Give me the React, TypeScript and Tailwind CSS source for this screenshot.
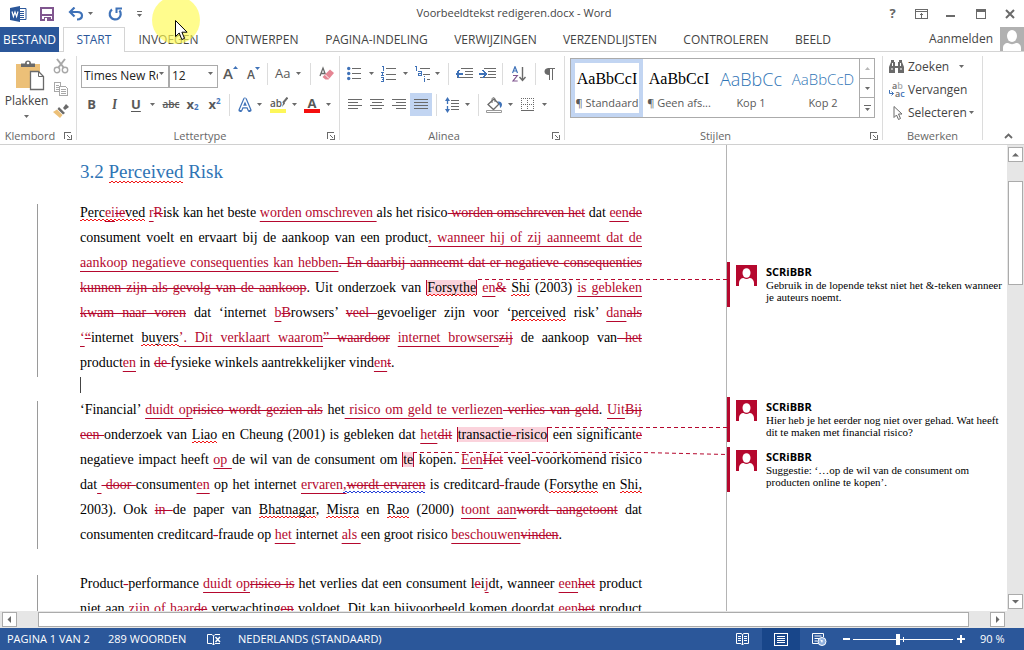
import React from "react";

type Kids = { children?: React.ReactNode };

const G = "#6a6a6a";
const B = "#3f72b8";

/* ---------- small building blocks ---------- */

function Svg({ w, h, crisp, children }: Kids & { w: number; h: number; crisp?: boolean }) {
  return (
    <svg width={w} height={h} viewBox={`0 0 ${w} ${h}`} fill="none" aria-hidden="true" className="shrink-0" shapeRendering={crisp ? "crispEdges" : "auto"}>
      {children}
    </svg>
  );
}

function Caret() {
  return (
    <Svg w={5} h={3}>
      <path d="M0 0h5L2.5 3z" fill={G} />
    </Svg>
  );
}

function Tool({ label, className, children }: Kids & { label: string; className: string }) {
  return (
    <button type="button" aria-label={label} className={`flex h-[23px] shrink-0 items-center justify-center ${className}`}>
      {children}
    </button>
  );
}

function Drop({ label, className, children }: Kids & { label: string; className: string }) {
  return (
    <button type="button" aria-label={label} className={`flex h-[23px] shrink-0 items-center justify-between ${className}`}>
      {children}
      <Caret />
    </button>
  );
}

function Sep({ className }: { className: string }) {
  return <span className={`h-[22px] w-px shrink-0 bg-[#dcdcdc] ${className}`} />;
}

function Launcher({ label }: { label: string }) {
  return (
    <button type="button" aria-label={label} className="absolute right-1 bottom-0">
      <Svg w={8} h={8} crisp>
        <path d="M0.5 7V0.5H7M3 3l3 3M7.5 3v4.5H3" stroke={G} />
      </Svg>
    </button>
  );
}

function Group({ title, launcher, className, children }: Kids & { title: string; launcher?: boolean; className: string }) {
  return (
    <section aria-label={title} className={`relative my-1 flex shrink-0 flex-col border-r border-[#dcdcdc] ${className}`}>
      <div className="flex-1">{children}</div>
      <div className={`h-2 text-center text-[11px] leading-2 text-[#666] ${launcher ? "pr-4" : ""}`}>{title}</div>
      {launcher && <Launcher label={`${title} opties`} />}
    </section>
  );
}

/* ---------- title bar ---------- */

function TitleBar() {
  return (
    <header className="relative flex h-[27px] shrink-0 items-center">
      <div className="flex items-center pl-2.5">
        <Svg w={17} h={16}>
          <path d="M9 2.5h7v11H9" stroke="#2b579a" fill="#fff" />
          <path d="M10 5.5h4M10 7.5h4M10 9.5h4M10 11.5h4" stroke="#2b579a" />
          <path d="M0 2l10-2v16L0 14z" fill="#2b579a" />
          <path d="M2 5.5l1.4 5L5 6l1.6 4.5L8 5.5" stroke="#fff" strokeWidth="1.2" />
        </Svg>
        <button type="button" aria-label="Opslaan" className="ml-[13px]">
          <Svg w={14} h={14} crisp>
            <path d="M1 1h12v12H1z" stroke="#80568f" strokeWidth="2" />
            <path d="M2 7h10v2H2zM4 10h7v4H4z" fill="#80568f" />
            <path d="M5 11h2v3H5z" fill="#fff" />
          </Svg>
        </button>
        <button type="button" aria-label="Ongedaan maken" className="ml-[14px] flex items-center gap-1">
          <Svg w={16} h={14}>
            <path d="M2 5h7.500c3 0 4.500 1.500 4.500 3.600C14 11 12 12.500 9 12.500" stroke={B} strokeWidth="2.2" />
            <path d="M6.500 0.500L2 5l4.500 4.500" stroke={B} strokeWidth="2.2" />
          </Svg>
          <Caret />
        </button>
        <button type="button" aria-label="Opnieuw" className="ml-[15px]">
          <Svg w={15} h={14}>
            <path d="M4 2.500A5.500 5.500 0 1 0 11.500 3.500" stroke={B} strokeWidth="2.2" />
            <path d="M8.500 6V1.500H14" stroke={B} strokeWidth="2" />
          </Svg>
        </button>
        <button type="button" aria-label="Werkbalk aanpassen" className="ml-[14px]">
          <Svg w={5} h={6}>
            <path d="M0 0h5v1H0zM0 3h5L2.500 6z" fill={G} />
          </Svg>
        </button>
      </div>
      <h1 className="flex-1 text-center text-[11px] text-[#444]">Voorbeeldtekst redigeren.docx - Word</h1>
      <div className="flex items-center pr-[9px]">
        <button type="button" aria-label="Help" className="w-[13px] text-[13px] font-bold text-[#666]">?</button>
        <button type="button" aria-label="Weergave lint" className="ml-4">
          <Svg w={13} h={10} crisp>
            <path d="M0.500 0.500h12v9H0.500zM0 2.500h13M6.500 4v5M4.500 6.500l2-2 2 2" stroke={G} />
          </Svg>
        </button>
        <button type="button" aria-label="Minimaliseren" className="ml-[18px]">
          <Svg w={10} h={10} crisp>
            <path d="M0 6h9v2H0z" fill={G} />
          </Svg>
        </button>
        <button type="button" aria-label="Maximaliseren" className="ml-5">
          <Svg w={10} h={10} crisp>
            <path d="M0.500 0.500h9v9H0.500z" stroke={G} />
            <path d="M0 0h10v3H0z" fill={G} />
          </Svg>
        </button>
        <button type="button" aria-label="Sluiten" className="ml-[19px]">
          <Svg w={10} h={10}>
            <path d="M1 1l8 8M9 1L1 9" stroke={G} strokeWidth="2" />
          </Svg>
        </button>
      </div>
    </header>
  );
}

/* ---------- tabs ---------- */

const tabs = [
  { name: "INVOEGEN", cls: "w-[87px]" },
  { name: "ONTWERPEN", cls: "w-[100px]" },
  { name: "PAGINA-INDELING", cls: "w-[129px]" },
  { name: "VERWIJZINGEN", cls: "w-[109px]" },
  { name: "VERZENDLIJSTEN", cls: "w-[120px]" },
  { name: "CONTROLEREN", cls: "w-[112px]" },
  { name: "BEELD", cls: "w-[62px]" },
];

function Tabs() {
  return (
    <nav className="flex h-[25px] shrink-0 border-b border-[#d4d4d4] text-[12px] text-[#444]">
      <button type="button" className="mb-[-1px] w-[59px] bg-[#2b579a] text-center text-white">BESTAND</button>
      <button type="button" className="mb-[-1px] ml-1 w-[62px] border border-b-0 border-[#d4d4d4] bg-white text-center text-[#2b579a]">START</button>
      {tabs.map((t) => (
        <button key={t.name} type="button" className={`shrink-0 pt-0.5 text-center whitespace-nowrap ${t.cls}`}>{t.name}</button>
      ))}
      <a href="#aanmelden" className="ml-auto flex items-center gap-[7px]">
        Aanmelden
        <Svg w={24} h={24}>
          <path d="M0 0h24v24H0z" fill="#b1b1b1" />
          <ellipse cx="12" cy="9" rx="5" ry="6" fill="#fff" />
          <path d="M3 24v-3c0-3 2-5 5-5 2.500 1.500 5.500 1.500 8 0 3 0 5 2 5 5v3z" fill="#fff" />
        </Svg>
      </a>
    </nav>
  );
}

/* ---------- ribbon ---------- */

function Clipboard() {
  return (
    <Group title="Klembord" launcher className="w-[77px]">
      <div className="flex">
        <button type="button" className="flex w-[53px] flex-col items-center pt-1 text-[12px] leading-4 text-[#444]">
          <span className="pl-1.5">
            <Svg w={30} h={31}>
              <path d="M1 4h24v24H1z" fill="#ecc078" />
              <path d="M6 7V3.500h4C10 1.500 11 0.500 13 0.500s3 1 3 3h4V7z" fill={G} />
              <circle cx="13" cy="3" r="1.3" fill="#fff" />
              <path d="M15.500 11.500h8l5 5v13h-13z" fill="#fff" stroke={G} strokeWidth="1.3" />
              <path d="M23.500 11.500v5h5" stroke={G} />
            </Svg>
          </span>
          <span className="mt-0.5">Plakken</span>
          <span className="mt-1.5"><Caret /></span>
        </button>
        <div className="flex flex-col items-center gap-2 pt-0.5">
          <button type="button" aria-label="Knippen">
            <Svg w={16} h={16}>
              <path d="M4 1l7 9M12 1L5 10" stroke="#a8a8a8" strokeWidth="2" />
              <circle cx="4" cy="12" r="2.7" stroke="#a8a8a8" strokeWidth="1.4" />
              <circle cx="12" cy="12" r="2.7" stroke="#a8a8a8" strokeWidth="1.4" />
            </Svg>
          </button>
          <button type="button" aria-label="Kopiëren">
            <Svg w={16} h={14} crisp>
              <path d="M1.500 0.500h6v9h-6zM3 3.500h3M3 5.500h3M3 7.500h3" stroke="#a8a8a8" />
              <path d="M6.500 4.500h6l2 2v7h-8z" fill="#fff" stroke="#a8a8a8" />
              <path d="M8 7.500h5M8 9.500h5M8 11.500h5" stroke="#a8a8a8" />
            </Svg>
          </button>
          <button type="button" aria-label="Opmaak kopiëren">
            <Svg w={16} h={14}>
              <path d="M13 0l3 3-4 3-2-2z" fill={G} />
              <path d="M6 3l6 6-2 1.500-5.500-5.500z" fill={G} />
              <path d="M4 5.500l5.500 5.500L7 14 0 8z" fill="#ecc078" />
            </Svg>
          </button>
        </div>
      </div>
    </Group>
  );
}

function Picker({ label, values, className }: { label: string; values: string[]; className: string }) {
  return (
    <span className={`relative h-[23px] shrink-0 ${className}`}>
      <select aria-label={label} className="h-full w-full appearance-none overflow-hidden border border-[#ababab] bg-white pr-2.5 pl-0.5 text-[12px] text-[#222]">
        {values.map((v) => (
          <option key={v}>{v}</option>
        ))}
      </select>
      <span className="pointer-events-none absolute top-[10px] right-[5px]"><Caret /></span>
    </span>
  );
}

function FontGroup() {
  return (
    <Group title="Lettertype" launcher className="w-[263px]">
      <div className="flex flex-col gap-2 pt-[6px] pl-1 text-[#595959]">
        <div className="flex items-center">
          <Picker label="Lettertype" values={["Times New Roman", "Arial", "Calibri"]} className="w-[88px]" />
          <Picker label="Tekengrootte" values={["12", "10", "11", "14"]} className="w-[49px]" />
          <Tool label="Lettertype vergroten" className="w-[25px] text-[15px] font-semibold">
            A
            <span className="mb-3"><Svg w={5} h={3}><path d="M0 3h5L2.500 0z" fill={B} /></Svg></span>
          </Tool>
          <Tool label="Lettertype verkleinen" className="w-[21px] pt-0.5 text-[12px] font-semibold">
            A
            <span className="mb-3"><Svg w={5} h={3}><path d="M0 0h5L2.500 3z" fill={B} /></Svg></span>
          </Tool>
          <Sep className="ml-[3px]" />
          <Drop label="Hoofdletters" className="ml-[7px] w-[26px] text-[13px]">Aa</Drop>
          <Sep className="ml-[9px]" />
          <Tool label="Opmaak wissen" className="ml-2 w-4">
            <Svg w={16} h={16}>
              <path d="M1 10L4 2l3 8M2 7.500h4" stroke={G} strokeWidth="1.3" />
              <path d="M11 3.500l4 3.500-5.500 6.500H6.500L3.500 11z" fill="#e58593" />
              <path d="M6 8.500l4 4" stroke="#fff" />
            </Svg>
          </Tool>
        </div>
        <div className="flex items-center text-[13px] font-bold">
          <Tool label="Vet" className="w-[21px]">B</Tool>
          <Tool label="Cursief" className="w-[25px] font-serif italic">I</Tool>
          <Drop label="Onderstrepen" className="ml-1 w-[24px] underline underline-offset-2">U</Drop>
          <Tool label="Doorhalen" className="ml-1.5 w-[20px] text-[10px] font-semibold line-through">abc</Tool>
          <Tool label="Subscript" className="w-[23px]">
            x<sub className="text-[8px] leading-none text-[#3f72b8]">2</sub>
          </Tool>
          <Tool label="Superscript" className="w-[21px]">
            x<sup className="text-[8px] leading-none text-[#3f72b8]">2</sup>
          </Tool>
          <Sep className="ml-1" />
          <Drop label="Teksteffecten" className="ml-2 w-[24px]">
            <Svg w={14} h={15}>
              <path d="M2.500 13L7 2.500 11.500 13M4.500 9.500h5" stroke={B} strokeWidth="4" strokeLinejoin="round" strokeLinecap="round" />
              <path d="M2.500 13L7 2.500 11.500 13M4.500 9.500h5" stroke="#fff" strokeWidth="1.6" />
            </Svg>
          </Drop>
          <Drop label="Markeren" className="ml-2 w-[27px]">
            <span className="flex flex-col">
              <span className="flex h-3 items-center text-[10px] leading-3 font-semibold">
                ab
                <Svg w={6} h={11}>
                  <path d="M5.500 0.500L1 6" stroke={G} strokeWidth="2" />
                  <path d="M1.500 4.500L0 10l3-3.500z" fill={G} />
                </Svg>
              </span>
              <span className="h-1 w-4 bg-[#fdf75a]" />
            </span>
          </Drop>
          <Drop label="Tekstkleur" className="ml-[7px] w-[27px]">
            <span className="flex flex-col">
              <span className="h-3 text-center text-[13px] leading-3">A</span>
              <span className="h-1 w-4 bg-[#f50f0f]" />
            </span>
          </Drop>
        </div>
      </div>
    </Group>
  );
}

function Bars({ d }: { d: string }) {
  return (
    <Svg w={14} h={11} crisp>
      <path d={d} stroke={G} />
    </Svg>
  );
}

function ParagraphGroup() {
  return (
    <Group title="Alinea" launcher className="w-[225px]">
      <div className="flex flex-col gap-2 pt-[6px] pl-[7px] text-[#595959]">
        <div className="flex items-center">
          <Drop label="Opsommingstekens" className="w-[27px]">
            <Svg w={14} h={15}>
              <path d="M5 2.500h9M5 7.500h9M5 12.500h9" stroke={G} />
              <circle cx="1.7" cy="2.5" r="1.7" fill={B} />
              <circle cx="1.7" cy="7.5" r="1.7" fill={B} />
              <circle cx="1.7" cy="12.5" r="1.7" fill={B} />
            </Svg>
          </Drop>
          <Drop label="Nummering" className="ml-[7px] w-[27px]">
            <Svg w={15} h={16} crisp>
              <path d="M5 2.500h10M5 8.500h10M5 13.500h10" stroke={G} />
              <path d="M0.500 0.500H2v4M0 6h2.500L1 9.500h2M0 11.500h2.500v4H0M1 13.500h1" stroke={B} />
            </Svg>
          </Drop>
          <Drop label="Lijst met meerdere niveaus" className="ml-[6px] w-[26px]">
            <Svg w={17} h={16} crisp>
              <path d="M6 2.500h10M9 8.500h7M13 13.500h3" stroke={G} />
              <path d="M0.500 0.500H2v4M4 5.500h3v4H4.500v-2H7M10.500 10v1M10.500 12v4" stroke={B} />
            </Svg>
          </Drop>
          <Sep className="ml-2" />
          <Tool label="Inspringing verkleinen" className="ml-[7px] w-[17px]">
            <Svg w={17} h={12} crisp>
              <path d="M5 0.500h12M9 3.500h8M9 6.500h8M1 9.500h16" stroke={G} />
              <path d="M0 5h7v2H0z" fill={B} />
              <path d="M3.500 2L0.500 6l3 4" stroke={B} strokeWidth="1.5" />
            </Svg>
          </Tool>
          <Tool label="Inspringing vergroten" className="ml-1.5 w-[17px]">
            <Svg w={17} h={12} crisp>
              <path d="M5 0.500h12M9 3.500h8M9 6.500h8M1 9.500h16" stroke={G} />
              <path d="M0 5h7v2H0z" fill={B} />
              <path d="M4 2l3 4-3 4" stroke={B} strokeWidth="1.5" />
            </Svg>
          </Tool>
          <Sep className="ml-[6px]" />
          <Tool label="Sorteren" className="ml-2 w-4">
            <Svg w={15} h={16}>
              <path d="M0.500 7L3 0.700 5.500 7M1.500 5h3" stroke={B} strokeWidth="1.2" />
              <path d="M1 9.500h4.300L1 15h4.700" stroke="#80568f" strokeWidth="1.2" />
              <path d="M10.500 1v13M7.500 11l3 3.500 3-3.500" stroke={G} strokeWidth="1.4" />
            </Svg>
          </Tool>
          <Sep className="ml-[8px]" />
          <Tool label="Alineamarkeringen" className="ml-[7px] w-3">
            <Svg w={11} h={12}>
              <path d="M4 0h7v1H4z" fill={G} />
              <path d="M5 0v7C2 7 0.500 5.500 0.500 3.500S2 0 5 0z" fill={G} />
              <path d="M5.500 0v12M8.500 0v12" stroke={G} />
            </Svg>
          </Tool>
        </div>
        <div className="flex items-center">
          <Tool label="Links uitlijnen" className="w-[15px]"><Bars d="M0 0.500h14M0 3.500h10M0 6.500h14M0 9.500h10" /></Tool>
          <Tool label="Centreren" className="ml-2 w-[14px]"><Bars d="M0 0.500h14M2 3.500h10M0 6.500h14M2 9.500h10" /></Tool>
          <Tool label="Rechts uitlijnen" className="ml-2 w-[14px]"><Bars d="M0 0.500h14M4 3.500h10M0 6.500h14M4 9.500h10" /></Tool>
          <Tool label="Uitvullen" className="ml-1 w-[22px] bg-[#c2d5f2]"><Bars d="M0 0.500h14M0 3.500h14M0 6.500h14M0 9.500h14" /></Tool>
          <Sep className="ml-1" />
          <Drop label="Regelafstand" className="ml-2 w-[25px]">
            <Svg w={14} h={16}>
              <path d="M6 3.500h8M6 6.500h8M6 9.500h8M6 12.500h8" stroke={G} />
              <path d="M2.500 2v12" stroke={B} strokeWidth="1.3" strokeDasharray="5 2" />
              <path d="M0 4l2.500-4L5 4zM0 12l2.500 4L5 12z" fill={B} />
            </Svg>
          </Drop>
          <Sep className="ml-2" />
          <Drop label="Arcering" className="ml-[7px] w-[27px]">
            <Svg w={17} h={16}>
              <path d="M2 7.500L8 2l5 5-5.500 5.500z" fill="#fff" stroke={G} strokeWidth="1.3" />
              <path d="M6 6V2.500c0-2.500 3-2.500 3 0V5" stroke={G} />
              <path d="M11.500 4.500c3-0.500 4.500 1 4.500 3 0 2-1 3-2 3.500 0-2-0.500-4-2.500-6.500z" fill={B} />
              <path d="M0.500 13.500h15v2H0.500z" fill="#fff" stroke="#999" />
            </Svg>
          </Drop>
          <Drop label="Randen" className="ml-2 w-[26px]">
            <Svg w={13} h={13} crisp>
              <path d="M0 0.500h13M0.500 0v12M12.500 0v12M6.500 0v12M0 6.500h13" stroke={G} strokeDasharray="1 1" />
              <path d="M0 12.500h13" stroke={G} />
            </Svg>
          </Drop>
        </div>
      </div>
    </Group>
  );
}

function Style({ sample, name, sampleCls, active }: { sample: string; name: string; sampleCls: string; active?: boolean }) {
  return (
    <button type="button" className={`flex w-[72px] shrink-0 flex-col items-center overflow-hidden border-4 pt-0.5 ${active ? "border-[#c2d5f2]" : "border-transparent"}`}>
      <span className={`flex h-7 w-full items-center justify-center whitespace-nowrap ${sampleCls}`}>{sample}</span>
      <span className="mt-0.5 text-[11px] leading-4 whitespace-nowrap text-[#595959]">{name}</span>
    </button>
  );
}

function StylesGroup() {
  return (
    <Group title="Stijlen" launcher className="w-[318px]">
      <div className="mt-0.5 ml-[5px] flex h-[60px] w-[305px] border border-[#ababab]">
        <Style active sample="AaBbCcI" name="¶ Standaard" sampleCls="font-['Liberation_Serif',serif] text-[16px] text-black" />
        <Style sample="AaBbCcI" name="¶ Geen afs..." sampleCls="font-['Liberation_Serif',serif] text-[16px] text-black" />
        <Style sample="AaBbCc" name="Kop 1" sampleCls="text-[18px] font-light text-[#2e74b5]" />
        <Style sample="AaBbCcD" name="Kop 2" sampleCls="text-[15px] font-light text-[#2e74b5]" />
        <div className="ml-auto flex w-[15px] flex-col divide-y divide-[#ababab] border-l border-[#ababab]">
          <button type="button" aria-label="Omhoog" className="flex flex-1 items-center justify-center">
            <Svg w={5} h={3}><path d="M0 3h5L2.500 0z" fill="#b8b8b8" /></Svg>
          </button>
          <button type="button" aria-label="Omlaag" className="flex flex-1 items-center justify-center"><Caret /></button>
          <button type="button" aria-label="Meer stijlen" className="flex flex-1 items-center justify-center">
            <Svg w={7} h={6}><path d="M0 0h7v1H0zM1 3h5L3.500 6z" fill={G} /></Svg>
          </button>
        </div>
      </div>
    </Group>
  );
}

function EditGroup() {
  const row = "flex h-[23px] items-center text-[12px] text-[#444]";
  return (
    <Group title="Bewerken" className="w-[100px]">
      <div className="-mt-px flex flex-col pl-[6px]">
        <button type="button" className={row}>
          <Svg w={15} h={13}>
            <path d="M2 0h3v2h1v4h3V2h1V0h3v2l2 5v6H9V8H6v5H0V7l2-5z" fill={G} />
            <path d="M2 9h2M11 9h2M3.500 3v3M11.500 3v3" stroke="#fff" />
          </Svg>
          <span className="ml-1">Zoeken</span>
          <span className="ml-2.5"><Caret /></span>
        </button>
        <button type="button" className={row}>
          <span className="flex w-[17px] flex-col text-[9px] leading-2 font-semibold text-[#6a6a6a]">
            <span>a<span className="text-[#aaa]">b</span></span>
            <span className="flex">
              <Svg w={6} h={7}><path d="M0.500 0v3.500h4M2.500 1.500l2 2-2 2" stroke={B} /></Svg>
              a<span className="text-[#3f72b8]">c</span>
            </span>
          </span>
          <span className="ml-0.5">Vervangen</span>
        </button>
        <button type="button" className={row}>
          <Svg w={16} h={16}>
            <path d="M5 1.500v11l2.500-2.500 2 4.500 2-1-2-4.500H13z" stroke={G} fill="#fff" />
          </Svg>
          <span className="ml-[3px]">Selecteren</span>
          <span className="ml-0.5"><Caret /></span>
        </button>
      </div>
    </Group>
  );
}

/* ---------- document ---------- */

const Ins = ({ children }: Kids) => <ins className="text-[#b5082e] underline decoration-[#b5082e] decoration-1 underline-offset-4 [text-decoration-skip-ink:none]">{children}</ins>;
const Del = ({ children }: Kids) => <del className="text-[#b5082e] line-through decoration-[#b5082e] decoration-1">{children}</del>;
const Sp = ({ children }: Kids) => (
  <span className="bg-[linear-gradient(90deg,#f01818_50%,transparent_50%),linear-gradient(90deg,transparent_50%,#f01818_50%)] bg-[length:4px_1px,4px_1px] bg-[position:left_bottom,left_bottom_1px] bg-repeat-x pb-px">{children}</span>
);
const Gr = ({ children }: Kids) => (
  <span className="bg-[linear-gradient(90deg,#2440d8_50%,transparent_50%),linear-gradient(90deg,transparent_50%,#2440d8_50%)] bg-[length:4px_1px,4px_1px] bg-[position:left_bottom,left_bottom_1px] bg-repeat-x pb-px">{children}</span>
);
const Note = ({ children }: Kids) => <mark className="border-x border-[#b5082e] bg-[#fbd3dc] text-black">{children}</mark>;

function Line({ last, children }: Kids & { last?: boolean }) {
  return <span className={`block whitespace-nowrap ${last ? "" : "[text-align-last:justify]"}`}>{children}</span>;
}

function Para({ children }: Kids) {
  return (
    <div className="flex gap-[42px]">
      <span className="mt-1 mb-[-2px] w-px shrink-0 bg-[#9a9a9a]" />
      <p className="w-[562px] leading-[25px]">{children}</p>
    </div>
  );
}

function Document() {
  return (
    <article className="min-w-0 flex-1 overflow-hidden pt-[15px] pl-[37px] font-['Liberation_Serif','Times_New_Roman',serif] text-[14px] text-black">
      <h2 className="mb-4 pl-[43px] text-[19px] leading-6 text-[#2e74b5]">3.2 <Sp>Perceived</Sp> Risk</h2>
      <Para>
        <Line><Sp>Perc<Ins>ei</Ins><Del>ie</Del>ved</Sp> <Ins>r</Ins><Del>R</Del>isk kan het beste <Ins>worden omschreven </Ins>als het risico<Del> worden omschreven het</Del> dat <Ins>een</Ins><Del>de</Del></Line>
        <Line>consument voelt en ervaart bij de aankoop van een product<Ins>, wanneer hij of zij aanneemt dat de</Ins></Line>
        <Line><Ins>aankoop negatieve consequenties kan hebben</Ins><Del>. En daarbij aanneemt dat er negatieve consequenties</Del></Line>
        <Line><Del>kunnen zijn als gevolg van de aankoop</Del>. Uit onderzoek van <Note><Sp>Forsythe</Sp></Note> <Ins>en</Ins><Del>&amp;</Del> <Sp>Shi</Sp> (2003) <Ins>is gebleken</Ins></Line>
        <Line><Del>kwam naar voren</Del> dat ‘internet <Ins>b</Ins><Del>B</Del>rowsers’ <Del>veel </Del>gevoeliger zijn voor ‘<Sp>perceived</Sp> risk’ <Ins>dan</Ins><Del>als</Del></Line>
        <Line><Ins>‘</Ins><Del>“</Del>internet <Sp>buyers</Sp><Ins>’. Dit verklaart waarom</Ins><Del>” waardoor</Del> <Ins>internet browsers</Ins><Del>zij</Del> de aankoop van<Del> het</Del></Line>
        <Line last>product<Ins>en</Ins> in <Del>de </Del>fysieke winkels aantrekkelijker vind<Ins>en</Ins><Del>t</Del>.</Line>
      </Para>
      <div className="h-[22px] pt-0.5 pl-[43px]"><span className="block h-4 w-px bg-[#444]" /></div>
      <Para>
        <Line>‘Financial’ <Ins>duidt op</Ins><Del>risico wordt gezien als</Del> het<Ins> risico om geld te verliezen</Ins><Del> verlies van geld</Del>. <Ins>Uit</Ins><Del>Bij</Del></Line>
        <Line><Del>een </Del>onderzoek van <Sp>Liao</Sp> en Cheung (2001) is gebleken dat <Ins>het</Ins><Del>dit</Del> <Note>transactie<Del>-</Del>risico</Note> een significant<Del>e</Del></Line>
        <Line>negatieve impact heeft <Ins>op </Ins>de wil van de consument om <Note>te</Note> kopen. <Ins>Een</Ins><Del>Het</Del> veel<Del>-</Del>voorkomend risico</Line>
        <Line>dat<Ins>{"\u00a0"}</Ins><Del> door </Del>consument<Ins>en</Ins> op het internet <Ins>ervaren</Ins><Gr><Ins>,</Ins><Del>wordt ervaren</Del></Gr> is creditcard<Del>-</Del>fraude (<Sp>Forsythe</Sp> en <Sp>Shi,</Sp></Line>
        <Line>2003). Ook <Del>in </Del>de paper van <Sp>Bhatnagar</Sp>, <Sp>Misra</Sp> en <Sp>Rao</Sp> (2000) <Ins>toont aan</Ins><Del>wordt aangetoont</Del> dat</Line>
        <Line last>consumenten creditcard<Del>-</Del>fraude op <Ins>het </Ins>internet <Ins>als </Ins>een groot risico <Ins>beschouwen</Ins><Del>vinden</Del>.</Line>
      </Para>
      <div className="h-6" />
      <Para>
        <Line>Product<Del>-</Del>performance <Ins>duidt op</Ins><Del>risico is</Del> het verlies dat een consument l<Del>e</Del>i<Ins>j</Ins>dt, wanneer <Ins>een</Ins><Del>het</Del> product</Line>
        <Line>niet aan <Ins>zijn of haar</Ins><Del>de</Del> verwachting<Del>en</Del> voldoet. Dit kan bijvoorbeeld komen doordat <Ins>een</Ins><Del>het</Del> product</Line>
      </Para>
    </article>
  );
}

function Comment({ children }: Kids) {
  return (
    <li className="flex h-[45px] border-l-[3px] border-[#b5082e] pt-[3px] pl-[6px]">
      <Svg w={21} h={21}>
        <path d="M0 0h21v21H0z" fill="#b5082e" />
        <ellipse cx="10.5" cy="8" rx="4" ry="4.8" fill="#fff" />
        <path d="M3 21v-3c0-3 2-5 4.500-5 2 1.300 4 1.300 6 0 2.500 0 4.500 2 4.500 5v3z" fill="#fff" />
      </Svg>
      <div className="ml-[9px] w-[237px]">
        <p className="h-3.5 text-[11px] leading-3.5 font-bold">SCRiBBR</p>
        <p className="font-['Liberation_Serif','Times_New_Roman',serif] text-[11px] leading-3">{children}</p>
      </div>
    </li>
  );
}

function Comments() {
  return (
    <aside aria-label="Opmerkingen" className="w-[281px] shrink-0 border-l border-[#b4b4b4] pt-[117px] text-black">
      <ul className="flex flex-col gap-[5px]">
        <Comment>Gebruik in de lopende tekst niet het &amp;-teken wanneer je auteurs noemt.</Comment>
        <li className="h-20" aria-hidden="true" />
        <Comment>Hier heb je het eerder nog niet over gehad. Wat heeft dit te maken met financial risico?</Comment>
        <Comment>Suggestie: ‘…op de wil van de consument om producten online te kopen’.</Comment>
      </ul>
    </aside>
  );
}

function ScrollArrow({ label, d }: { label: string; d: string }) {
  return (
    <button type="button" aria-label={label} className="flex size-[15px] shrink-0 items-center justify-center border border-[#ababab] bg-white">
      <Svg w={7} h={7}><path d={d} fill={G} /></Svg>
    </button>
  );
}

/* ---------- status bar ---------- */

function StatusBar() {
  return (
    <footer className="flex h-[22px] shrink-0 items-center bg-[#2b579a] pl-[7px] text-[11px] text-white">
      <span className="w-[101px]">PAGINA 1 VAN 2</span>
      <span className="w-[99px]">289 WOORDEN</span>
      <button type="button" aria-label="Spellingcontrole" className="w-[31px]">
        <Svg w={15} h={13}>
          <path d="M6.500 12L5 10.500H0.500v-9H5l1.500 1.500 1.500-1.500h5M6.500 3v9l1.500-1.500h5" stroke="#fff" />
          <path d="M8.500 4l4.500 5M13 4L8.500 9" stroke="#fff" strokeWidth="1.5" />
        </Svg>
      </button>
      <span>NEDERLANDS (STANDAARD)</span>
      <div className="ml-auto flex h-full items-center">
        <button type="button" aria-label="Leesmodus">
          <Svg w={13} h={13}>
            <path d="M6.500 12V2L5.500 0.500H0.500v10H5l1.500 1.500L8 10.500h4.500v-10h-5L6.500 2M2 3.500h3M2 5.500h3M2 7.500h3M8 3.500h3M8 5.500h3M8 7.500h3" stroke="#fff" />
          </Svg>
        </button>
        <button type="button" aria-label="Afdrukweergave" className="ml-[13px] flex h-full w-[38px] items-center justify-center bg-[#18468a]">
          <Svg w={14} h={13} crisp>
            <path d="M0.500 0.500h13v12H0.500zM3 3.500h8M3 5.500h8M3 7.500h8M3 9.500h8" stroke="#fff" />
          </Svg>
        </button>
        <button type="button" aria-label="Weblay-out" className="ml-3">
          <Svg w={15} h={13}>
            <path d="M6 10.500H0.500v-10h11V4M2.500 3h7M2.500 5.500h5M2.500 8h3" stroke="#fff" />
            <circle cx="10" cy="8.5" r="4" fill="#8fb0de" stroke="#fff" />
            <path d="M8 6.500l3 1-1 2.500z" fill="#fff" />
          </Svg>
        </button>
        <button type="button" aria-label="Uitzoomen" className="ml-4 flex w-[7px] items-center">
          <span className="h-0.5 w-full bg-white" />
        </button>
        <input type="range" aria-label="Zoomen" min={10} max={190} defaultValue={90} className="mx-[3px] h-3 w-[100px] appearance-none bg-[linear-gradient(#fff,#fff),linear-gradient(#fff,#fff)] bg-[length:100%_1px,1px_5px] bg-center bg-no-repeat [&::-webkit-slider-thumb]:h-[11px] [&::-webkit-slider-thumb]:w-1 [&::-webkit-slider-thumb]:appearance-none [&::-webkit-slider-thumb]:bg-white" />
        <button type="button" aria-label="Inzoomen" className="ml-px">
          <Svg w={8} h={8} crisp><path d="M3 0h2v3h3v2H5v3H3V5H0V3h3z" fill="#fff" /></Svg>
        </button>
        <span className="w-[59px] pl-[15px]">90 %</span>
      </div>
    </footer>
  );
}

/* ---------- application ---------- */

export default function App() {
  return (
    <div className="relative flex h-screen flex-col overflow-hidden bg-white font-['Open_Sans','Segoe_UI',sans-serif]">
      <TitleBar />
      <Tabs />
      <div className="flex h-[93px] shrink-0 border-b border-[#d0d0d0]">
        <Clipboard />
        <FontGroup />
        <ParagraphGroup />
        <StylesGroup />
        <EditGroup />
        <button type="button" aria-label="Lint samenvouwen" className="ml-auto flex items-end pr-[11px] pb-[5px]">
          <Svg w={9} h={6}><path d="M1 5l3.500-3.500L8 5" stroke={G} strokeWidth="1.8" /></Svg>
        </button>
      </div>

      <div className="flex min-h-0 flex-1">
        <main className="relative flex min-w-0 flex-1 overflow-hidden">
          <Document />
          <Comments />
          <svg aria-hidden="true" className="pointer-events-none absolute inset-0 size-full" fill="none">
            <path d="M478 134.500H727M548 282.500H727M413 307.500H642L727 309.500" stroke="#b5082e" strokeDasharray="4 3" />
          </svg>
        </main>
        <div className="flex w-[17px] shrink-0 flex-col items-center bg-[#e6e6e6] py-0.5">
          <ScrollArrow label="Omhoog schuiven" d="M0 5.500h7L3.500 2z" />
          <span className="mt-[19px] h-[104px] w-[15px] border border-[#ababab] bg-white" />
          <span className="flex-1" />
          <ScrollArrow label="Omlaag schuiven" d="M0 2h7L3.500 5.500z" />
        </div>
      </div>

      <div className="flex h-[17px] shrink-0 items-center bg-[#e6e6e6] pr-[19px] pl-0.5">
        <ScrollArrow label="Naar links schuiven" d="M5 0v7L1.500 3.500z" />
        <span className="mr-[21px] ml-[21px] h-[15px] flex-1 border border-[#ababab] bg-white" />
        <ScrollArrow label="Naar rechts schuiven" d="M2 0v7l3.500-3.500z" />
      </div>
      <StatusBar />

      <span className="pointer-events-none absolute top-[-4px] left-[152px] size-12 rounded-full bg-[#fffb50]/65" />
      <svg width="14" height="22" viewBox="0 0 14 22" aria-hidden="true" className="pointer-events-none absolute top-5 left-[175px]">
        <path d="M0.500 0.500v16l3.700-3.500 2.600 6.500 2.700-1.100-2.600-6.200h5.200z" fill="#fff" stroke="#000" />
      </svg>
    </div>
  );
}
